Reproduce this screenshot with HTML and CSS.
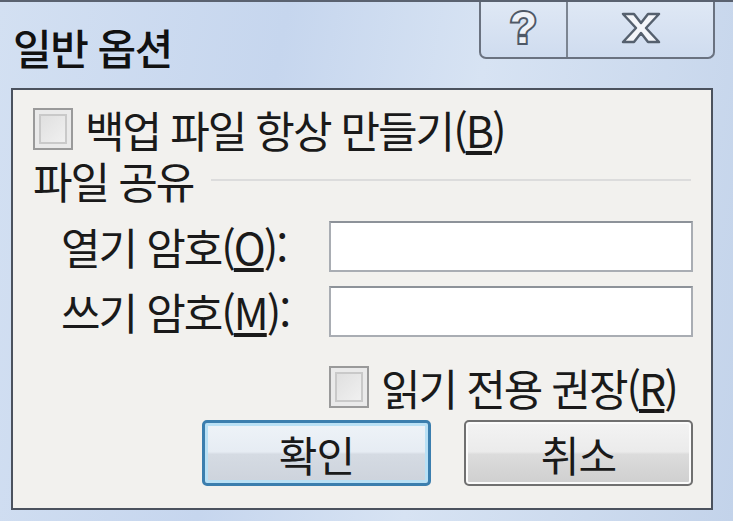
FILE: index.html
```html
<!DOCTYPE html>
<html lang="ko">
<head>
    <meta charset="UTF-8">
    <meta name="viewport" content="width=device-width, initial-scale=1.0">
    <title>일반 옵션</title>
    <link rel="stylesheet" href="styles.css">
</head>
<body>
<div class="window">
    <div class="title-bar">
        <h1 class="title">일반 옵션</h1>
        <div class="caption-buttons">
            <span class="caption-btn help">?</span>
            <span class="caption-btn close">
                <svg width="42" height="32" viewBox="0 0 42 32">
                    <path d="M3 2 H14 L21 11 L28 2 H39 L26 16 L39 30 H28 L21 21 L14 30 H3 L16 16 Z" fill="#f4f6fa" stroke="#55606e" stroke-width="2.5" stroke-linejoin="round"/>
                </svg>
            </span>
        </div>
    </div>
    <div class="content">
        <label class="check-row">
            <span class="checkbox"></span>
            <span>백업 파일 항상 만들기(<u>B</u>)</span>
        </label>
        <div class="group-title">
            <span>파일 공유</span>
            <span class="group-line"></span>
        </div>
        <div class="field-row">
            <span class="field-label">열기 암호(<u>O</u>):</span>
            <span class="text-box"></span>
        </div>
        <div class="field-row">
            <span class="field-label">쓰기 암호(<u>M</u>):</span>
            <span class="text-box"></span>
        </div>
        <label class="check-row readonly">
            <span class="checkbox"></span>
            <span>읽기 전용 권장(<u>R</u>)</span>
        </label>
        <div class="button-row">
            <button class="btn default">확인</button>
            <button class="btn">취소</button>
        </div>
    </div>
</div>
</body>
</html>
```

FILE: styles.css
```css
* {
    margin: 0;
    padding: 0;
    box-sizing: border-box;
}
body {
    font-family: "Noto Sans CJK KR", "Liberation Sans", sans-serif;
    color: #1a1a1a;
    background-color: #c8d7ec;
}
.window {
    width: 733px;
    height: 521px;
    display: flex;
    flex-direction: column;
    border-top: 2px solid #5a6270;
    background: linear-gradient(100deg, #d3e0f2 0%, #c6d6ee 35%, #d7e3f3 60%, #c3d3ea 100%);
}
.title-bar {
    height: 86px;
    display: flex;
    align-items: flex-start;
}
.title {
    font-size: 42px;
    font-weight: 500;
    line-height: 1.2;
    padding: 20px 0 0 13px;
    letter-spacing: -1.5px;
    color: #111;
}
.caption-buttons {
    margin-left: auto;
    margin-right: 18px;
    width: 236px;
    height: 57px;
    display: flex;
    border: 2px solid #6a7280;
    border-top: none;
    border-radius: 0 0 7px 7px;
    background: linear-gradient(#dfe8f5, #cfdcef);
}
.caption-btn {
    display: flex;
    align-items: center;
    justify-content: center;
    padding-bottom: 4px;
}
.help {
    width: 87px;
    border-right: 2px solid #7c8592;
    font-family: "Liberation Sans", sans-serif;
    font-size: 44px;
    font-weight: bold;
    color: #eef2f8;
    -webkit-text-stroke: 4px #4e5866;
    paint-order: stroke fill;
}
.close {
    flex: 1;
}
.content {
    flex: 1;
    margin: 0 20px 11px 11px;
    border: 2px solid #4b525e;
    background-color: #f2f1ee;
    padding: 17px 18px 0 20px;
    font-size: 43px;
    line-height: 1;
    letter-spacing: -2px;
}
.check-row {
    display: flex;
    align-items: center;
    gap: 12px;
    height: 44px;
}
.checkbox {
    flex: none;
    width: 40px;
    height: 42px;
    border: 2px solid #9a9a9a;
    background: linear-gradient(135deg, #dcdcdc, #f4f4f4);
    box-shadow: inset 0 0 0 4px #eaeaea, inset 0 0 0 6px #c9c9c9;
}
.group-title {
    display: flex;
    align-items: center;
    gap: 18px;
    height: 46px;
    margin: 6px 0 13px;
}
.group-line {
    flex: 1;
    height: 2px;
    background-color: #dcdcdc;
    margin-right: 2px;
}
.field-row {
    display: flex;
    align-items: center;
    height: 60px;
    margin-bottom: 5px;
}
.field-label {
    width: 296px;
    padding-left: 28px;
}
.text-box {
    width: 365px;
    height: 51px;
    background-color: #fff;
    border: 2px solid #a9adb3;
    border-top-color: #8d9299;
}
.readonly {
    margin: 24px 0 0 296px;
    gap: 12px;
}
.button-row {
    display: flex;
    justify-content: flex-end;
    gap: 33px;
    margin-top: 11px;
}
.btn {
    width: 229px;
    height: 66px;
    font-family: inherit;
    font-size: 42px;
    letter-spacing: -1px;
    color: #1a1a1a;
    border: 2px solid #707070;
    border-radius: 5px;
    background: linear-gradient(#f3f3f3 0%, #ebebeb 48%, #dcdcdc 52%, #cfcfcf 100%);
    box-shadow: inset 0 0 0 2px #fbfbfb;
}
.btn.default {
    border: 3px solid #3b7eae;
    box-shadow: inset 0 0 0 3px #b9e0f5;
    background: linear-gradient(#eef3f8 0%, #e6ecf3 48%, #d5dbe3 52%, #cdd3dc 100%);
}
```
